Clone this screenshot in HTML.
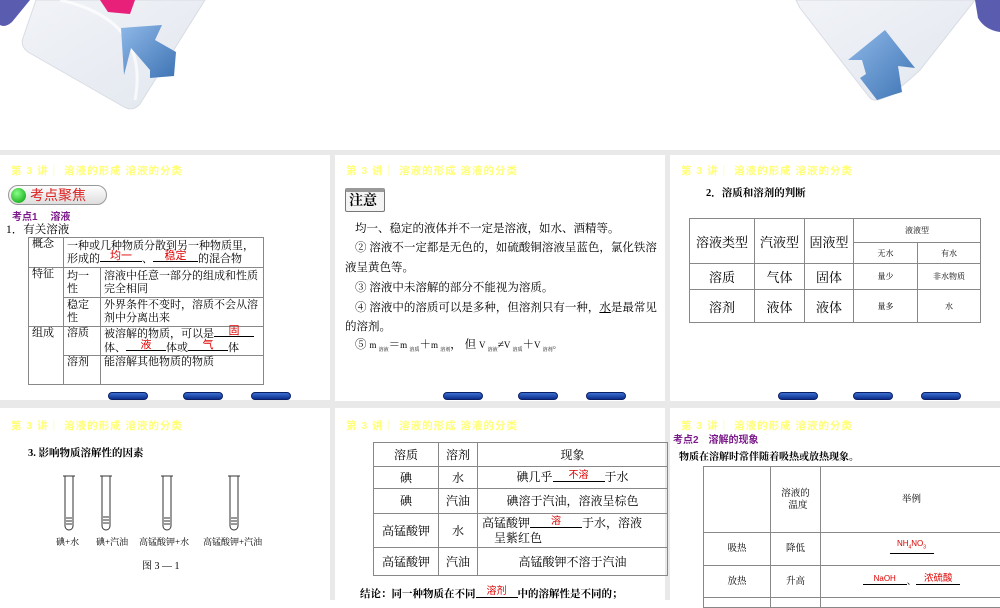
<!DOCTYPE html>
<html><head><meta charset="utf-8"><style>
*{margin:0;padding:0;box-sizing:border-box}
body{width:1000px;height:600px;overflow:hidden;background:#fff;position:relative;font-family:"Liberation Serif","Noto Serif CJK SC","Noto Sans CJK SC",serif;color:#000}
.a{position:absolute;white-space:nowrap}
.p{position:absolute;background:#fff}
.hd{position:absolute;font:10.5px "Liberation Sans","Noto Sans CJK SC",sans-serif;color:#ffff78;font-weight:bold;letter-spacing:1px}
.btn{position:absolute;width:40px;height:8px;border-radius:4px;background:linear-gradient(#3a6fd0,#0c2d8c);border:1px solid #0a1f66}
table{position:absolute;border-collapse:collapse;font-size:11px}
td{border:1px solid #888;vertical-align:middle;white-space:nowrap}
.r{color:#d00;font-family:"Liberation Sans","Noto Sans CJK SC",sans-serif}
.u{display:inline-block;border-bottom:1px solid #000;text-align:center;line-height:10px;position:relative;top:-3px}
.s{font-family:"Liberation Sans","Noto Sans CJK SC",sans-serif}
</style></head><body>
<div class="a" style="left:0;top:150px;width:1000px;height:450px;background:#e9e9e9"></div>
<svg class="a" style="left:0;top:0" width="1000" height="150">
<defs><linearGradient id="g" x1="0" y1="0" x2="1" y2="1"><stop offset="0" stop-color="#f1f3f7"/><stop offset="1" stop-color="#e2e7ef"/></linearGradient>
<linearGradient id="b" x1="0" y1="0" x2="1" y2="1"><stop offset="0" stop-color="#8fb8e8"/><stop offset="1" stop-color="#3e74b4"/></linearGradient></defs>
<path d="M0 0 H30 L12 22 Q5 28 0 25Z" fill="#5a5cb0"/>
<path d="M36 0 H205 L140 104 Q133 112 124 107 L28 52 Q20 46 23 38Z" fill="url(#g)" stroke="#d8dce3"/>
<path d="M60 0 Q150 20 135 100" fill="none" stroke="#fff" stroke-width="3" opacity=".7"/>
<path d="M100 0 L135 0 L130 14 L108 12Z" fill="#e8207a"/>
<path d="M121 28 L162 25 L155 40 L176 52 L174 76 L150 78 L150 70 L131 48 L124 75Z" fill="url(#b)"/>
<path d="M796 0 H975 L920 70 Q880 108 870 98 L800 8Z" fill="url(#g)" stroke="#d8dce3"/>
<path d="M975 0 H1000 V32 Q985 30 978 18Z" fill="#5a5cb0"/>
<path d="M885 30 L915 68 L898 66 L902 92 L877 100 L860 78 L866 74 L862 60 L848 60Z" fill="url(#b)"/>
</svg>

<!-- panel 1 -->
<div class="p" style="left:0;top:155px;width:330px;height:245px"></div>
<div class="hd" style="left:11px;top:163px">第 3 讲｜ 溶液的形成 溶液的分类</div>
<div class="a" style="left:8px;top:185px;width:99px;height:20px;border:1px solid #999;border-radius:10px;background:linear-gradient(#fff,#ddd)"></div>
<div class="a" style="left:11px;top:188px;width:15px;height:15px;border-radius:50%;background:radial-gradient(circle at 40% 35%,#8f8,#090)"></div>
<div class="a s" style="left:30px;top:185px;font-size:14px;color:#d22;line-height:20px">考点聚焦</div>
<div class="a s" style="left:12px;top:208px;font-size:10px;color:#7b1a8a;font-weight:bold">考点1　&nbsp;溶液</div>
<div class="a" style="left:6px;top:221px;font-size:11.5px">1．有关溶液</div>
<table style="left:28px;top:237px;width:236px;line-height:13px;font-size:11px">
<tr style="height:30px"><td style="width:35px;padding-left:3px;vertical-align:top">概念</td><td colspan="2" style="padding-left:3px">一种或几种物质分散到另一种物质里，<br>形成的<span class="u" style="width:42px"><span class="r">均一</span></span>、<span class="u" style="width:45px"><span class="r">稳定</span></span>的混合物</td></tr>
<tr style="height:30px"><td rowspan="2" style="padding-left:3px;vertical-align:top">特征</td><td style="width:37px;padding-left:3px">均一<br>性</td><td style="padding-left:3px">溶液中任意一部分的组成和性质<br>完全相同</td></tr>
<tr style="height:29px"><td style="padding-left:3px">稳定<br>性</td><td style="padding-left:3px">外界条件不变时，溶质不会从溶<br>剂中分离出来</td></tr>
<tr style="height:29px"><td rowspan="2" style="padding-left:3px;vertical-align:top">组成</td><td style="padding-left:3px;vertical-align:top">溶质</td><td style="padding-left:3px;line-height:14px">被溶解的物质，可以是<span class="u" style="width:40px"><span class="r">固</span></span><br>体、<span class="u" style="width:40px"><span class="r">液</span></span>体或<span class="u" style="width:40px"><span class="r">气</span></span>体</td></tr>
<tr style="height:29px"><td style="padding-left:3px;vertical-align:top">溶剂</td><td style="padding-left:3px;vertical-align:top">能溶解其他物质的物质</td></tr>
</table>
<div class="btn" style="left:108px;top:392px"></div><div class="btn" style="left:183px;top:392px"></div><div class="btn" style="left:251px;top:392px"></div>

<!-- panel 2 -->
<div class="p" style="left:335px;top:155px;width:330px;height:246px"></div>
<div class="hd" style="left:346px;top:163px">第 3 讲｜ 溶液的形成 溶液的分类</div>
<div class="a" style="left:345px;top:188px;width:40px;height:24px;border:1px solid #777;border-radius:2px;background:#f4f4f4;border-top:4px solid #999"></div>
<div class="a" style="left:349px;top:193px;font-size:14px;line-height:17px;font-weight:bold">注意</div>
<div class="a" style="left:355px;top:220px;font-size:11.5px">均一、稳定的液体并不一定是溶液，如水、酒精等。</div>
<div class="a" style="left:355px;top:239px;font-size:11.5px">② 溶液不一定都是无色的，如硫酸铜溶液呈蓝色，氯化铁溶</div>
<div class="a" style="left:345px;top:259px;font-size:11.5px">液呈黄色等。</div>
<div class="a" style="left:355px;top:279px;font-size:11.5px">③ 溶液中未溶解的部分不能视为溶质。</div>
<div class="a" style="left:355px;top:299px;font-size:11.5px">④ 溶液中的溶质可以是多种，但溶剂只有一种，<u>水</u>是最常见</div>
<div class="a" style="left:345px;top:318px;font-size:11.5px">的溶剂。</div>
<div class="a" style="left:355px;top:336px;font-size:11.5px">⑤ <span style="font-size:9px">m <sub style="font-size:5px">溶液</sub></span>＝<span style="font-size:9px">m <sub style="font-size:5px">溶质</sub></span>＋<span style="font-size:9px">m <sub style="font-size:5px">溶剂</sub></span>， 但 <span style="font-size:9px">V <sub style="font-size:5px">溶液</sub></span>≠<span style="font-size:9px">V <sub style="font-size:5px">溶质</sub></span>＋<span style="font-size:9px">V <sub style="font-size:5px">溶剂</sub>。</span></div>
<div class="btn" style="left:443px;top:392px"></div><div class="btn" style="left:518px;top:392px"></div><div class="btn" style="left:586px;top:392px"></div>

<!-- panel 3 -->
<div class="p" style="left:670px;top:155px;width:330px;height:246px"></div>
<div class="hd" style="left:681px;top:163px">第 3 讲｜ 溶液的形成 溶液的分类</div>
<div class="a" style="left:706px;top:185px;font-size:10.5px;font-weight:bold">2．溶质和溶剂的判断</div>
<table style="left:689px;top:218px;width:292px;text-align:center">
<tr style="height:24px"><td rowspan="2" style="width:65px;font-size:13px">溶液类型</td><td rowspan="2" style="width:50px;font-size:13px">汽液型</td><td rowspan="2" style="width:49px;font-size:13px">固液型</td><td colspan="2" style="font-size:8px">液液型</td></tr>
<tr style="height:21px"><td style="width:64px;font-size:8px">无水</td><td style="font-size:8px">有水</td></tr>
<tr style="height:26px"><td style="font-size:13px">溶质</td><td style="font-size:13px">气体</td><td style="font-size:13px">固体</td><td style="font-size:8px">量少</td><td style="font-size:8px">非水物质</td></tr>
<tr style="height:33px"><td style="font-size:13px">溶剂</td><td style="font-size:13px">液体</td><td style="font-size:13px">液体</td><td style="font-size:8px">量多</td><td style="font-size:8px">水</td></tr>
</table>
<div class="btn" style="left:778px;top:392px"></div><div class="btn" style="left:853px;top:392px"></div><div class="btn" style="left:921px;top:392px"></div>

<!-- panel 4 -->
<div class="p" style="left:0;top:408px;width:330px;height:192px"></div>
<div class="hd" style="left:11px;top:418px">第 3 讲｜ 溶液的形成 溶液的分类</div>
<div class="a" style="left:28px;top:445px;font-size:10.5px;font-weight:bold">3. 影响物质溶解性的因素</div>
<svg class="a" style="left:0;top:470px" width="330" height="65">
<g fill="none" stroke="#333" stroke-width="1">
<path d="M63 6 h12 M65 6 v50 a4 4 0 0 0 8 0 v-50"/><path d="M66 48 h6 M66 51 h6 M66 54 h6"/>
<path d="M100 6 h12 M102 6 v50 a4 4 0 0 0 8 0 v-50"/><path d="M103 47 h6 M103 50 h6 M103 53 h6"/>
<path d="M161 6 h12 M163 6 v50 a4 4 0 0 0 8 0 v-50"/><path d="M164 48 h6 M164 51 h6 M164 54 h6"/>
<path d="M228 6 h12 M230 6 v50 a4 4 0 0 0 8 0 v-50"/><path d="M231 48 h6 M231 51 h6 M231 54 h6"/>
</g></svg>
<div class="a" style="left:56px;top:535px;font-size:9px">碘+水</div>
<div class="a" style="left:96px;top:535px;font-size:9px">碘+汽油</div>
<div class="a" style="left:139px;top:535px;font-size:9px">高锰酸钾+水</div>
<div class="a" style="left:203px;top:535px;font-size:9px">高锰酸钾+汽油</div>
<div class="a" style="left:142px;top:557px;font-size:10px">图 3 — 1</div>

<!-- panel 5 -->
<div class="p" style="left:335px;top:408px;width:330px;height:192px"></div>
<div class="hd" style="left:346px;top:418px">第 3 讲｜ 溶液的形成 溶液的分类</div>
<table style="left:373px;top:442px;width:295px;text-align:center;font-size:12px;line-height:14px">
<tr style="height:24px"><td style="width:65px">溶质</td><td style="width:39px">溶剂</td><td>现象</td></tr>
<tr style="height:22px"><td>碘</td><td>水</td><td>碘几乎<span class="u" style="width:52px"><span class="r" style="font-size:10px">不溶</span></span>于水</td></tr>
<tr style="height:25px"><td>碘</td><td>汽油</td><td>碘溶于汽油，溶液呈棕色</td></tr>
<tr style="height:34px"><td>高锰酸钾</td><td>水</td><td style="text-align:left;padding-left:4px">高锰酸钾<span class="u" style="width:52px"><span class="r" style="font-size:10px">溶</span></span>于水，溶液<br>&nbsp;&nbsp;&nbsp;&nbsp;呈紫红色</td></tr>
<tr style="height:28px"><td>高锰酸钾</td><td>汽油</td><td>高锰酸钾不溶于汽油</td></tr>
</table>
<div class="a" style="left:360px;top:586px;font-size:10.5px;font-weight:bold">结论：同一种物质在不同<span class="u" style="width:42px;font-weight:normal"><span class="r" style="font-size:10px">溶剂</span></span>中的溶解性是不同的；</div>

<!-- panel 6 -->
<div class="p" style="left:670px;top:408px;width:330px;height:192px"></div>
<div class="hd" style="left:681px;top:418px">第 3 讲｜ 溶液的形成 溶液的分类</div>
<div class="a s" style="left:673px;top:431px;font-size:10px;color:#7b1a8a;font-weight:bold">考点2　溶解的现象</div>
<div class="a" style="left:679px;top:448px;font-size:10px;font-weight:bold">物质在溶解时常伴随着吸热或放热现象。</div>
<table style="left:703px;top:466px;width:300px;text-align:center;font-size:9.5px;line-height:12px">
<tr style="height:66px"><td style="width:67px"></td><td style="width:50px">溶液的<br>&nbsp;&nbsp;温度</td><td>举例</td></tr>
<tr style="height:33px"><td>吸热</td><td>降低</td><td><span class="u" style="width:44px"><span class="r" style="font-size:8px">NH<sub style="font-size:5px">4</sub>NO<sub style="font-size:5px">3</sub></span></span></td></tr>
<tr style="height:32px"><td>放热</td><td>升高</td><td><span class="u" style="width:44px"><span class="r" style="font-size:8px">NaOH</span></span>、<span class="u" style="width:44px"><span class="r">浓硫酸</span></span></td></tr>
<tr style="height:10px"><td></td><td></td><td></td></tr>
</table>
</body></html>
